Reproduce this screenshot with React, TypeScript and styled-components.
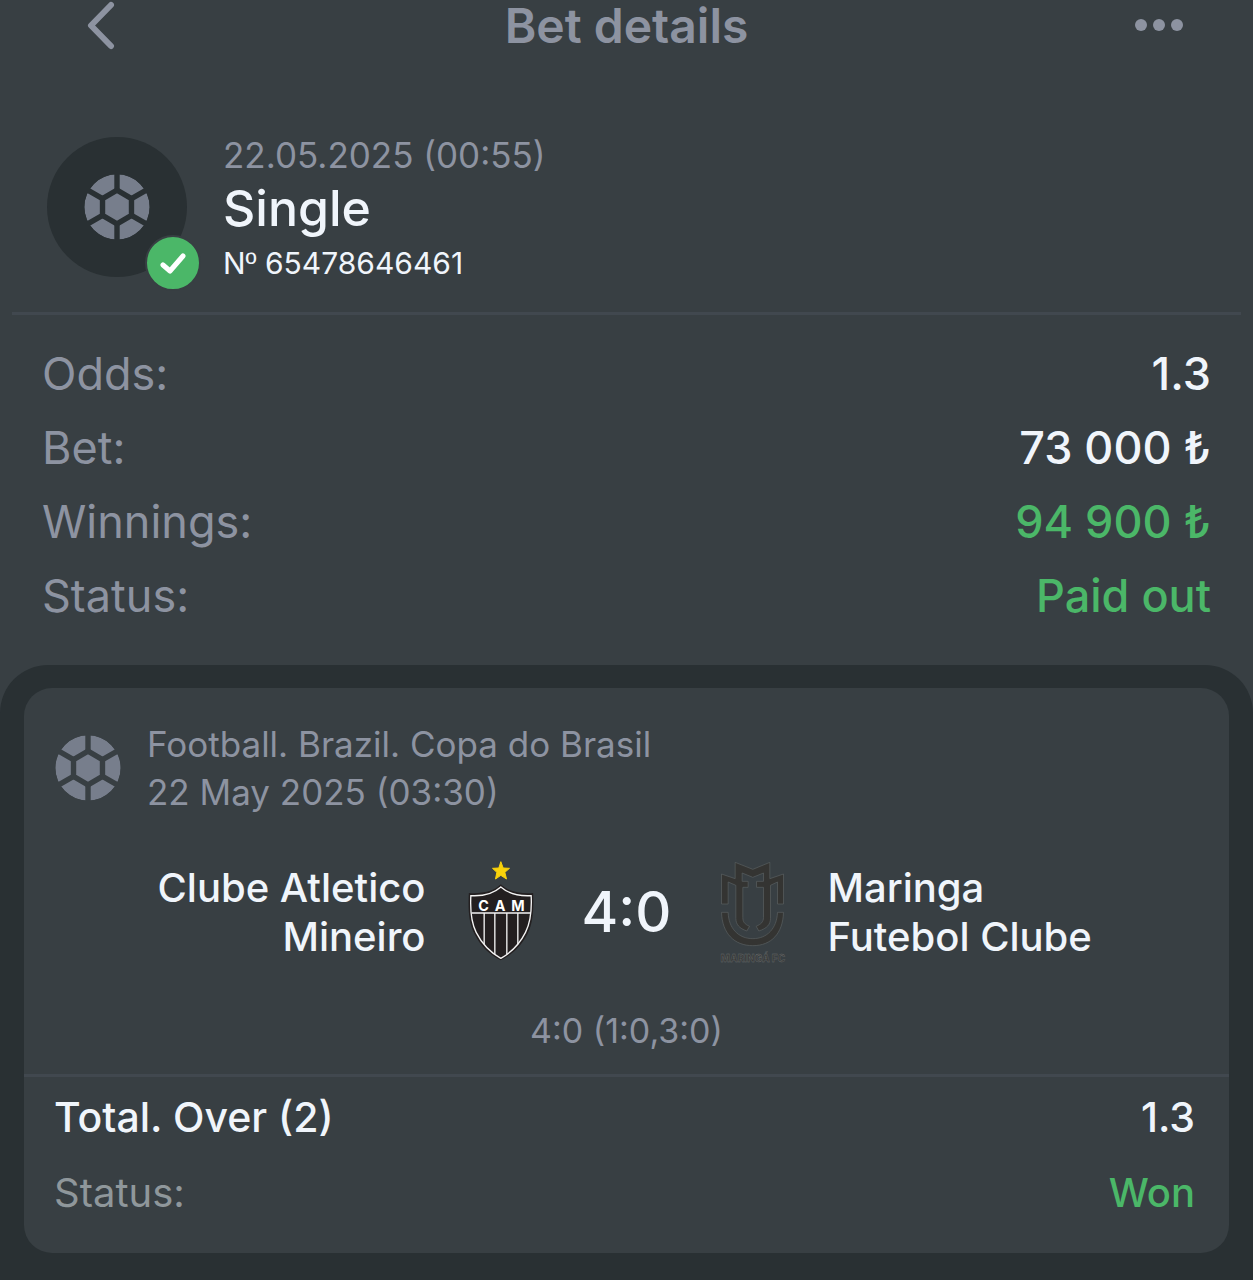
import React, { useId } from "react";
import styled, { createGlobalStyle } from "styled-components";

const color = {
  surface: "#383f43",
  well: "#293033",
  line: "#41484f",
  muted: "#8d93a1",
  faded: "#8f979b",
  icon: "#777e8c",
  text: "#f0f5fb",
  green: "#4bb768",
};

const GlobalStyle = createGlobalStyle`
  * { box-sizing: border-box; }
  body {
    margin: 0;
    background: ${color.surface};
    color: ${color.text};
    font-family: Inter, "Liberation Sans", sans-serif;
  }
  h1, h2, p, dl, dd, dt { margin: 0; font-weight: inherit; }
`;

const Page = styled.div`
  min-height: 100vh;
  display: flex;
  flex-direction: column;
`;

const TopBar = styled.header`
  display: grid;
  grid-template-columns: 1fr auto 1fr;
  align-items: center;
  height: 52px;
  padding: 0 70px;
`;

const IconButton = styled.button<{ $end?: boolean }>`
  display: flex;
  padding: 0;
  border: 0;
  background: none;
  color: ${color.muted};
  justify-self: ${(p) => (p.$end ? "end" : "start")};
  cursor: pointer;
`;

const Title = styled.h1`
  font-size: 48px;
  line-height: 52px;
  font-weight: 600;
  color: ${color.muted};
`;

const Summary = styled.section`
  display: flex;
  gap: 36px;
  margin: 0 12px;
  padding: 82px 35px 26px;
  border-bottom: 3px solid ${color.line};
`;

const Avatar = styled.div`
  position: relative;
  display: grid;
  place-items: center;
  width: 140px;
  height: 140px;
  margin: 3px 0;
  border-radius: 50%;
  background: ${color.well};
`;

const Badge = styled.span`
  position: absolute;
  right: -14px;
  bottom: -14px;
  display: grid;
  place-items: center;
  width: 56px;
  height: 56px;
  border: 2px solid ${color.surface};
  border-radius: 50%;
  background: ${color.green};
`;

const SummaryText = styled.div`
  display: flex;
  flex-direction: column;
`;

const Stamp = styled.p`
  font-size: 35px;
  line-height: 42px;
  color: ${color.muted};
`;

const Kind = styled.h2`
  font-size: 50px;
  line-height: 64px;
  font-weight: 500;
`;

const Ticket = styled.p`
  font-size: 30px;
  line-height: 46px;
`;

const Ordinal = styled.span`
  font-family: "Liberation Sans", sans-serif;
  line-height: 1;
`;

const Facts = styled.dl`
  padding: 22px 42px 32px;
`;

const Fact = styled.div`
  display: flex;
  justify-content: space-between;
  font-size: 45px;
  line-height: 74px;
`;

const Label = styled.dt<{ $faded?: boolean }>`
  color: ${(p) => (p.$faded ? color.faded : color.muted)};
`;

const Value = styled.dd<{ $won?: boolean }>`
  font-weight: 500;
  color: ${(p) => (p.$won ? color.green : color.text)};
`;

const Well = styled.main`
  flex: 1;
  padding: 23px 24px 27px;
  border-radius: 48px 48px 0 0;
  background: ${color.well};
`;

const Card = styled.article`
  border-radius: 28px;
  background: ${color.surface};
`;

const Event = styled.header`
  display: flex;
  align-items: center;
  gap: 26px;
  padding: 32px 31px 0;
`;

const EventText = styled.p`
  font-size: 35px;
  line-height: 48px;
  color: ${color.muted};
`;

const Match = styled.div`
  display: grid;
  grid-template-columns: 1fr auto auto auto 1fr;
  align-items: center;
  padding: 45px 31px 0;
`;

const Team = styled.p<{ $home?: boolean }>`
  font-size: 40px;
  line-height: 49px;
  font-weight: 500;
  justify-self: ${(p) => (p.$home ? "end" : "start")};
  text-align: ${(p) => (p.$home ? "right" : "left")};
  max-width: 300px;
  margin: 0 42px;
`;

const Score = styled.strong`
  min-width: 186px;
  font-size: 56px;
  line-height: 64px;
  font-weight: 500;
  text-align: center;
`;

const Periods = styled.p`
  padding: 44px 0 19px;
  font-size: 34px;
  line-height: 48px;
  color: ${color.muted};
  text-align: center;
`;

const Outcome = styled.dl`
  padding: 2px 34px 22px 30px;
  border-top: 3px solid ${color.line};
`;

const OutcomeRow = styled.div<{ $large?: boolean }>`
  display: flex;
  justify-content: space-between;
  font-size: ${(p) => (p.$large ? 41 : 40)}px;
  line-height: 76px;
`;

const Market = styled.dt`
  font-weight: 500;
`;

function Ball() {
  const mask = useId();
  return (
    <svg width="66" height="66" viewBox="-98 -98 196 196" aria-hidden="true">
      <mask id={mask} maskUnits="userSpaceOnUse" x="-98" y="-98" width="196" height="196">
        <circle r="97" fill="#fff" />
        <g fill="none" stroke="#000" strokeWidth="16">
          <path d="M0-50 43-25V25L0 50-43 25V-25Z" />
          <path d="M0-50V-100M0 50V100M43-25 87-50M43 25 87 50M-43-25-87-50M-43 25-87 50" />
        </g>
      </mask>
      <circle r="97" fill={color.icon} mask={`url(#${mask})`} />
    </svg>
  );
}

function AtleticoCrest() {
  return (
    <svg width="66" height="102" viewBox="84 33 197 306" role="img" aria-label="Clube Atletico Mineiro">
      <path d="M182 35 189 54 208 55 194 67 199 87 182 76 166 87 170 67 157 55 176 54Z" fill="#f9d20b" stroke="#f9d20b" strokeWidth="3" />
      <path
        d="M182 103C203 124 240 132 279 129C280 170 281 215 262 252C242 290 214 315 182 331C150 315 122 290 103 252C84 215 84 170 86 129C125 132 162 124 182 103Z"
        fill="#231f20"
      />
      <path
        d="M182 111C205 131 238 139 273 137C275 177 273 214 256 247C238 283 212 308 182 325C152 308 126 283 108 247C91 214 90 177 92 137C127 139 160 131 182 111Z"
        fill="#231f20"
        stroke="#f4f4f4"
        strokeWidth="4"
      />
      <path d="M94 189H272M132 189V283M164 189V313M200 189V313M233 189V283" stroke="#f4f4f4" strokeWidth="4" />
      <g fill="#fff" fontFamily="Inter, sans-serif" fontWeight="700" fontSize="43" textAnchor="middle">
        <text x="130" y="182">C</text>
        <text x="180" y="182">A</text>
        <text x="233" y="182">M</text>
      </g>
    </svg>
  );
}

function MaringaCrest() {
  return (
    <svg width="66" height="102" viewBox="59 30 197 306" role="img" aria-label="Maringa Futebol Clube">
      <g fill="#343432" stroke="#5a6062" strokeWidth="2">
        <path d="M63 69 104 83V34L157 55 208 34V83L249 69V159H231V93L210 103V202C210 220 200 232 175 240L167 226C182 219 189 213 189 199V109H168V91H189V66L157 79 125 66V91H143V109H127V199C127 213 132 219 147 226L139 240C116 232 106 220 106 202V103L83 93V159H63Z" />
        <path d="M63 184H83C84 232 114 263 157 263S229 232 231 184H249C247 247 213 284 157 284S65 247 63 184Z" />
      </g>
      <text x="157" y="332" fill="#3a3b3a" stroke="#6a6f71" strokeWidth="1" fontFamily="Inter, sans-serif" fontWeight="800" fontSize="30" textAnchor="middle">
        MARINGÁ FC
      </text>
    </svg>
  );
}

const facts = [
  { label: "Odds:", value: "1.3" },
  { label: "Bet:", value: "73 000 ₺" },
  { label: "Winnings:", value: "94 900 ₺", won: true },
  { label: "Status:", value: "Paid out", won: true },
];

export default function App() {
  return (
    <Page>
      <GlobalStyle />
      <TopBar>
        <IconButton aria-label="Back">
          <svg width="48" height="50" viewBox="0 0 48 50" fill="none" stroke="currentColor" strokeWidth="6" strokeLinecap="round" strokeLinejoin="round">
            <path d="M41 4 21 24.500 41 45" />
          </svg>
        </IconButton>
        <Title>Bet details</Title>
        <IconButton $end aria-label="More">
          <svg width="48" height="16" viewBox="0 0 48 16" fill="currentColor">
            <circle cx="6" cy="7" r="6" />
            <circle cx="24" cy="7" r="6" />
            <circle cx="42" cy="7" r="6" />
          </svg>
        </IconButton>
      </TopBar>

      <Summary>
        <Avatar>
          <Ball />
          <Badge>
            <svg width="26" height="22" viewBox="0 0 26 22" fill="none" stroke="#fff" strokeWidth="5" strokeLinecap="round" strokeLinejoin="round">
              <path d="M3 13 10 19 23 4" />
            </svg>
          </Badge>
        </Avatar>
        <SummaryText>
          <Stamp>22.05.2025 (00:55)</Stamp>
          <Kind>Single</Kind>
          <Ticket>
            N<Ordinal>º</Ordinal> 65478646461
          </Ticket>
        </SummaryText>
      </Summary>

      <Facts>
        {facts.map((f) => (
          <Fact key={f.label}>
            <Label>{f.label}</Label>
            <Value $won={f.won}>{f.value}</Value>
          </Fact>
        ))}
      </Facts>

      <Well>
        <Card>
          <Event>
            <Ball />
            <EventText>
              Football. Brazil. Copa do Brasil
              <br />
              22 May 2025 (03:30)
            </EventText>
          </Event>
          <Match>
            <Team $home>Clube Atletico Mineiro</Team>
            <AtleticoCrest />
            <Score>4:0</Score>
            <MaringaCrest />
            <Team>Maringa Futebol Clube</Team>
          </Match>
          <Periods>4:0 (1:0,3:0)</Periods>
          <Outcome>
            <OutcomeRow $large>
              <Market>Total. Over (2)</Market>
              <Value>1.3</Value>
            </OutcomeRow>
            <OutcomeRow>
              <Label $faded>Status:</Label>
              <Value $won>Won</Value>
            </OutcomeRow>
          </Outcome>
        </Card>
      </Well>
    </Page>
  );
}
